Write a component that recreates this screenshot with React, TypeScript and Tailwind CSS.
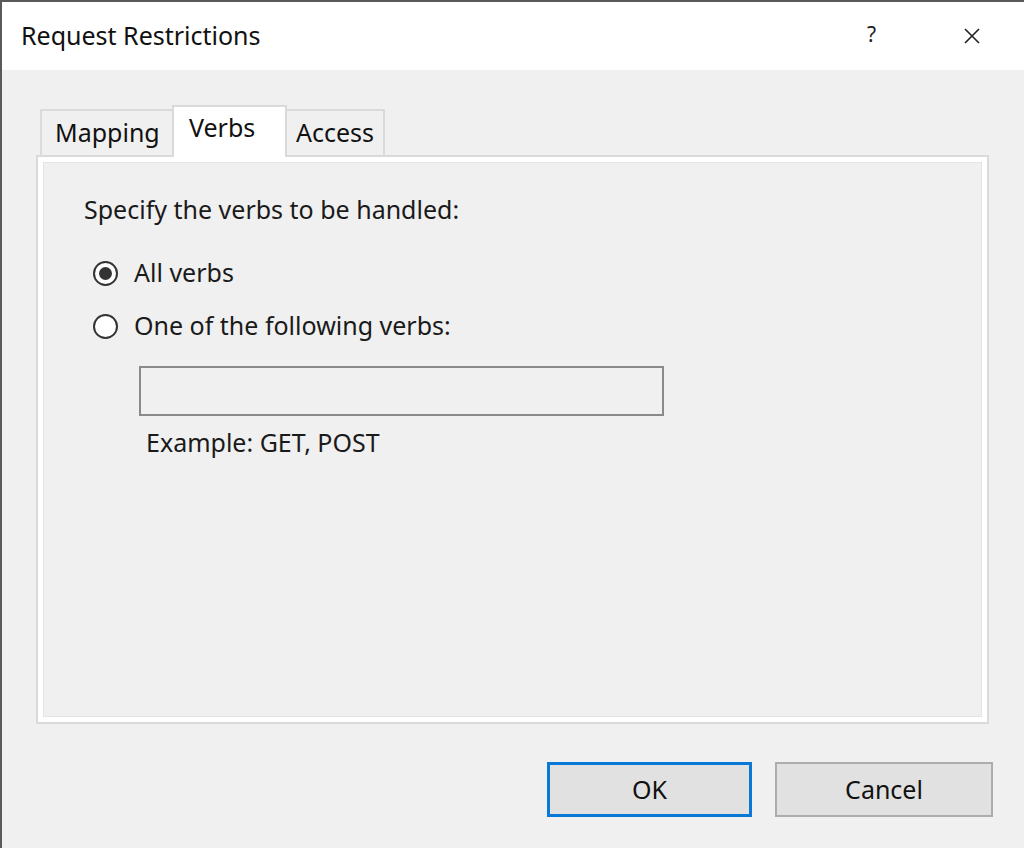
import React, { useState } from 'react'

const font = { fontFamily: '"Noto Sans", "Segoe UI", Arial, sans-serif' }

function Radio({ checked, label, onClick }: { checked: boolean; label: string; onClick: () => void }) {
    return (
        <button type="button" onClick={onClick} className="flex items-center gap-[16px] h-[30px] text-left">
            <span className="w-[25px] h-[25px] rounded-full border-2 border-[#333] bg-white flex items-center justify-center">
                {checked && <span className="w-[13px] h-[13px] rounded-full bg-[#333]" />}
            </span>
            <span className="text-[25px] text-[#1a1a1a]">{label}</span>
        </button>
    )
}

export default function App() {
    const [tab, setTab] = useState('verbs')
    const [mode, setMode] = useState<'all' | 'some'>('all')

    const tabs = [
        { id: 'mapping', label: 'Mapping', w: 'w-[134px] pl-[13px]' },
        { id: 'verbs', label: 'Verbs', w: 'w-[115px] pl-[15px]' },
        { id: 'access', label: 'Access', w: 'w-[100px] pl-[9px]' },
    ]

    return (
        <div style={font} className="w-[1024px] h-[848px] bg-[#f0f0f0] border-l-2 border-t-2 border-[#5a5a5a] flex flex-col overflow-hidden">
            {/* title bar */}
            <div className="h-[68px] bg-white flex items-center pl-[19px] pr-[44px]">
                <span className="text-[25px] text-[#111] flex-1 -mt-[1px]">Request Restrictions</span>
                <span className="text-[21px] text-[#222] mr-[88px] -mt-[2px]">?</span>
                <svg width="16" height="16" viewBox="0 0 16 16" className="text-[#222]">
                    <path d="M1 1 L15 15 M15 1 L1 15" stroke="currentColor" strokeWidth="1.6" fill="none" />
                </svg>
            </div>

            <div className="flex-1 flex flex-col pl-[34px] pr-[35px] pt-[33px]">
                {/* tabs */}
                <div className="flex items-end h-[52px] pl-[4px]">
                    {tabs.map(t => {
                        const active = t.id === tab
                        return (
                            <button
                                key={t.id}
                                type="button"
                                onClick={() => setTab(t.id)}
                                className={
                                    (active
                                        ? 'relative z-10 h-[52px] -mb-[2px] bg-white pb-[8px] '
                                        : 'h-[46px] bg-[#f0f0f0] ') +
                                    'border-2 border-b-0 border-[#dadada] text-[25px] text-[#111] flex items-center -ml-[2px] first:ml-0 ' +
                                    t.w
                                }
                            >
                                {t.label}
                            </button>
                        )
                    })}
                </div>

                {/* panel */}
                <div className="h-[569px] border-2 border-[#dadada] bg-white p-[5px]">
                    <div className="h-full bg-[#f0f0f0] border border-[#e4e4e4] pl-[40px] pt-[29px]">
                        <div className="text-[25px] text-[#1a1a1a] leading-[34px]">Specify the verbs to be handled:</div>
                        <div className="mt-[32px] pl-[9px] flex flex-col gap-[23px]">
                            <Radio checked={mode === 'all'} label="All verbs" onClick={() => setMode('all')} />
                            <Radio checked={mode === 'some'} label="One of the following verbs:" onClick={() => setMode('some')} />
                        </div>
                        <div className="ml-[55px] mt-[25px]">
                            <input
                                disabled={mode !== 'some'}
                                className="block w-[525px] h-[50px] border-2 border-[#8a8a8a] bg-[#f0f0f0] px-2 text-[22px] outline-none"
                            />
                            <div className="mt-[9px] pl-[7px] text-[25px] text-[#1a1a1a] leading-[34px]">Example: GET, POST</div>
                        </div>
                    </div>
                </div>

                {/* buttons */}
                <div className="flex justify-end gap-[23px] mt-[38px]">
                    <button type="button" className="w-[205px] h-[55px] bg-[#e1e1e1] border-[3px] border-[#0a78d7] text-[25px] text-[#111]">
                        OK
                    </button>
                    <button type="button" className="w-[218px] h-[55px] bg-[#e1e1e1] border-2 border-[#adadad] text-[25px] text-[#111] -mr-[4px]">
                        Cancel
                    </button>
                </div>
            </div>
        </div>
    )
}
